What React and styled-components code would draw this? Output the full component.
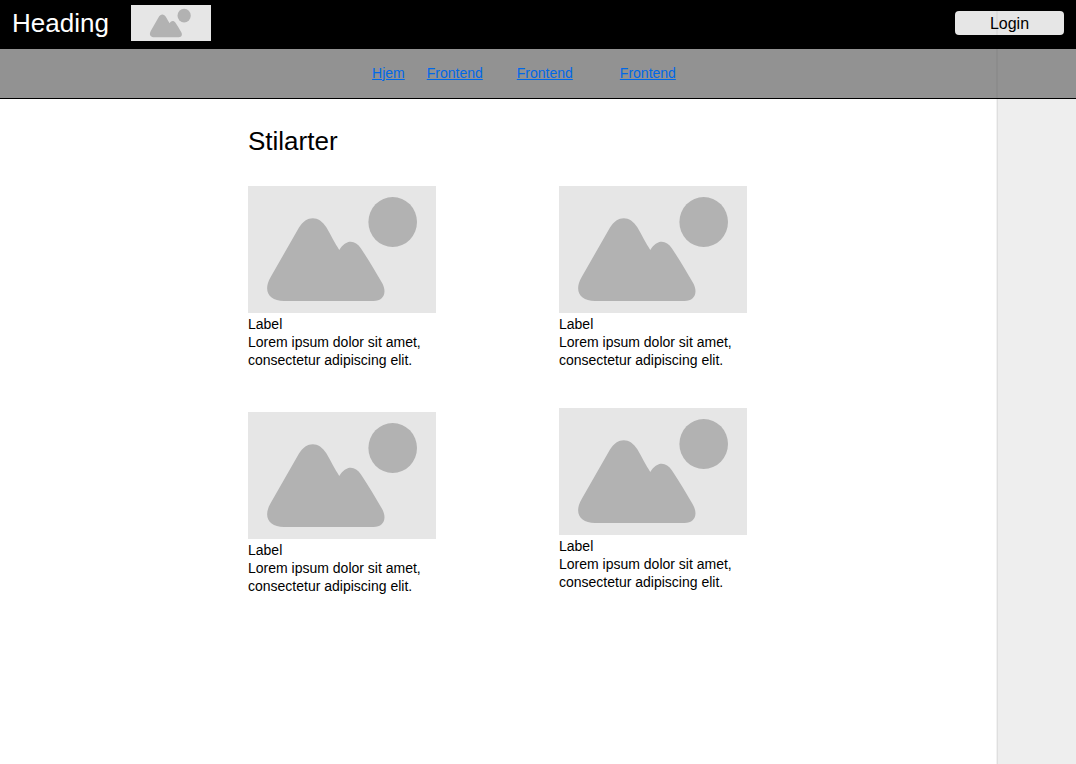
import React from "react";
import styled, { createGlobalStyle } from "styled-components";

const GlobalStyle = createGlobalStyle`
  * { box-sizing: border-box; }
  body {
    margin: 0;
    background: #fff;
    color: #000;
    font: 14px/18px "Liberation Sans", Arial, sans-serif;
  }
`;

const Page = styled.div`
  position: relative;
  min-height: 100vh;
  display: flex;
  flex-direction: column;
`;

const Header = styled.header`
  display: flex;
  align-items: center;
  height: 49px;
  padding: 0 12px 4px;
  background: #000;
`;

const Brand = styled.span`
  margin-right: 22px;
  color: #fff;
  font-size: 26px;
  line-height: 30px;
`;

const Logo = styled.svg`
  display: block;
  width: 80px;
  height: 36px;
  background: #e6e6e6;
`;

const LoginButton = styled.button`
  width: 109px;
  height: 24px;
  margin-left: auto;
  padding: 2px 0 0;
  border: 0;
  border-radius: 4px;
  background: #e6e6e6;
  color: #000;
  font: 16px/20px "Liberation Sans", Arial, sans-serif;
`;

const Nav = styled.nav`
  display: flex;
  justify-content: center;
  align-items: center;
  height: 50px;
  padding: 0 28px 2px 0;
  border-bottom: 1px solid #000;
  background: #929292;
`;

const NavLink = styled.a`
  margin-left: ${({ $gap }) => $gap}px;
  color: #0068e8;
`;

const Body = styled.div`
  flex: 1;
  display: flex;
`;

const Main = styled.main`
  flex: 1;
  padding: 27px 0 40px;
`;

const Content = styled.div`
  width: 500px;
  max-width: 100%;
  margin: 0 auto;
`;

const Title = styled.h1`
  margin: 0 0 30px;
  font-size: 26px;
  font-weight: 400;
  line-height: 30px;
`;

const Columns = styled.div`
  display: flex;
  gap: 123px;
`;

const Column = styled.div`
  display: flex;
  flex-direction: column;
  gap: ${({ $gap }) => $gap}px;
  width: 188px;
`;

const Card = styled.article`
  display: flex;
  flex-direction: column;
`;

const Picture = styled.svg`
  display: block;
  width: 100%;
  height: 127px;
  margin-bottom: 2px;
  background: #e6e6e6;
`;

const CardTitle = styled.h2`
  margin: 0;
  font-size: 14px;
  font-weight: 400;
  line-height: 18px;
`;

const CardText = styled.p`
  margin: 0;
`;

const SidePanel = styled.aside`
  width: 80px;
  border-left: 1px solid #f2f2f2;
  background: #eee;
  box-shadow: inset 1px 0 #dfdfdf;
`;

const PanelEdge = styled.div`
  position: absolute;
  top: 11px;
  right: 78px;
  width: 2px;
  height: 87px;
  background: rgba(0, 0, 0, 0.04);
  pointer-events: none;
`;

const Landscape = () => (
  <g fill="#b2b2b2">
    <ellipse cx="144.7" cy="36" rx="24.3" ry="25" />
    <path d="M51 41.500C58.500 29 71 29 78.500 41.500C83 49 86.500 57 91.300 64C98 53 107 53.500 113 62.500C120 73 127.500 85.500 133.700 96.300C139.500 106 136 115 125.500 115H36C21 115 14.500 105 22.700 91Z" />
  </g>
);

const links = [
  { label: "Hjem", gap: 0 },
  { label: "Frontend", gap: 22 },
  { label: "Frontend", gap: 34 },
  { label: "Frontend", gap: 47 },
];

const columns = [
  { id: "left", gap: 43 },
  { id: "right", gap: 39 },
];

const StyleCard = () => (
  <Card>
    <Picture viewBox="0 0 188 127" role="img" aria-label="Placeholder">
      <Landscape />
    </Picture>
    <CardTitle>Label</CardTitle>
    <CardText>Lorem ipsum dolor sit amet, consectetur adipiscing elit.</CardText>
  </Card>
);

export default function App() {
  return (
    <Page>
      <GlobalStyle />
      <Header>
        <Brand>Heading</Brand>
        <Logo viewBox="-50 -3 293 132" role="img" aria-label="Logo">
          <Landscape />
        </Logo>
        <LoginButton type="button">Login</LoginButton>
      </Header>
      <Nav>
        {links.map(({ label, gap }) => (
          <NavLink key={gap} href="#" $gap={gap}>{label}</NavLink>
        ))}
      </Nav>
      <Body>
        <Main>
          <Content>
            <Title>Stilarter</Title>
            <Columns>
              {columns.map(({ id, gap }) => (
                <Column key={id} $gap={gap}>
                  <StyleCard />
                  <StyleCard />
                </Column>
              ))}
            </Columns>
          </Content>
        </Main>
        <SidePanel />
      </Body>
      <PanelEdge />
    </Page>
  );
}
